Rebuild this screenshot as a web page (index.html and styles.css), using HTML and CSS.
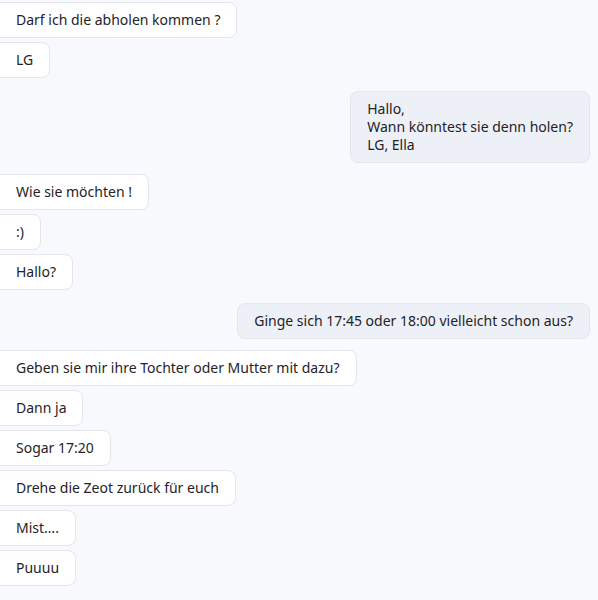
FILE: index.html
```html
<!DOCTYPE html>
<html lang="de">
<head>
<meta charset="utf-8">
<link rel="stylesheet" href="styles.css">
</head>
<body>
<div class="chat">
  <div class="msg in">Darf ich die abholen kommen ?</div>
  <div class="msg in">LG</div>
  <div class="msg out">Hallo,<br>Wann könntest sie denn holen?<br>LG, Ella</div>
  <div class="msg in">Wie sie möchten !</div>
  <div class="msg in">:)</div>
  <div class="msg in">Hallo?</div>
  <div class="msg out">Ginge sich 17:45 oder 18:00 vielleicht schon aus?</div>
  <div class="msg in">Geben sie mir ihre Tochter oder Mutter mit dazu?</div>
  <div class="msg in">Dann ja</div>
  <div class="msg in">Sogar 17:20</div>
  <div class="msg in">Drehe die Zeot zurück für euch</div>
  <div class="msg in">Mist….</div>
  <div class="msg in">Puuuu</div>
</div>
</body>
</html>
```
FILE: styles.css
```css
html, body {
  margin: 0;
  padding: 0;
  background: #f8f9fc;
}
body {
  font-family: "Noto Sans", "Open Sans", sans-serif;
  font-size: 14px;
  line-height: 18px;
  color: #1f2328;
}
.chat {
  display: flex;
  flex-direction: column;
  gap: 4px;
  padding: 2px 8px 0 0;
}
.msg {
  padding: 8px 16px;
  border: 1px solid #e3e6ee;
  border-radius: 8px;
}
.in {
  align-self: flex-start;
  background: #ffffff;
  margin-left: -10px;
  padding-left: 25px;
}
.out {
  align-self: flex-end;
  background: #edf0f6;
  margin: 9px 0 7px;
}
```
